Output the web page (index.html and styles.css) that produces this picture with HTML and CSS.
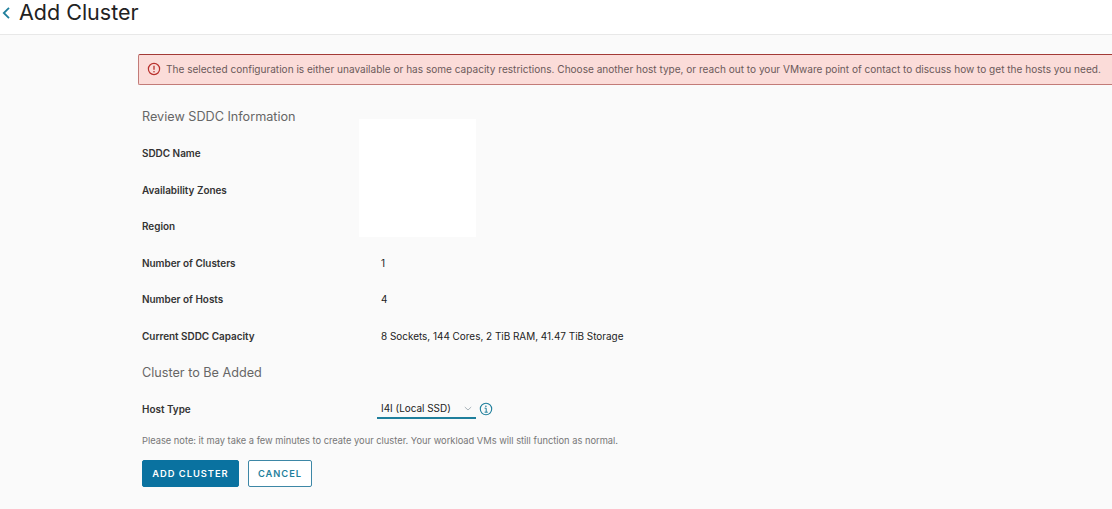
FILE: index.html
```html
<!DOCTYPE html>
<html lang="en">
<head>
<meta charset="utf-8">
<title>Add Cluster</title>
<link rel="stylesheet" href="styles.css">
</head>
<body>
<header class="page-header">
  <svg class="back" width="10" height="14" viewBox="0 0 10 14"><path d="M8 1.8 2.8 7 8 12.2" fill="none" stroke="#1f7f9c" stroke-width="1.8"/></svg>
  <h1>Add Cluster</h1>
</header>
<main class="content">
  <div class="alert">
    <svg class="alert-icon" width="14" height="14" viewBox="0 0 14 14"><circle cx="7" cy="7" r="5.6" fill="none" stroke="#b8302c" stroke-width="1.2"/><path d="M7 3.8v4" stroke="#b8302c" stroke-width="1.3"/><circle cx="7" cy="9.8" r=".8" fill="#b8302c"/></svg>
    <span class="alert-text">The selected configuration is either unavailable or has some capacity restrictions. Choose another host type, or reach out to your VMware point of contact to discuss how to get the hosts you need.</span>
  </div>
  <section class="form">
    <h2 class="row">Review SDDC Information</h2>
    <div class="row"><span class="label">SDDC Name</span></div>
    <div class="row"><span class="label">Availability Zones</span></div>
    <div class="row"><span class="label">Region</span></div>
    <div class="row"><span class="label">Number of Clusters</span><span class="value">1</span></div>
    <div class="row"><span class="label">Number of Hosts</span><span class="value">4</span></div>
    <div class="row"><span class="label">Current SDDC Capacity</span><span class="value">8 Sockets, 144 Cores, 2 TiB RAM, 41.47 TiB Storage</span></div>
    <h2 class="row">Cluster to Be Added</h2>
    <div class="row">
      <span class="label">Host Type</span>
      <span class="select">I4I (Local SSD)
        <svg class="chevron" width="8" height="5" viewBox="0 0 8 5"><path d="M.8 1 4 4l3.2-3" fill="none" stroke="#a9b4ba" stroke-width="1"/></svg>
      </span>
      <svg class="info" width="14" height="14" viewBox="0 0 14 14"><circle cx="7" cy="7" r="5.7" fill="none" stroke="#1f7f9c" stroke-width="1.1"/><path d="M5.6 6.2H7.2V10M5.6 10.2h3.2" fill="none" stroke="#1f7f9c" stroke-width="1"/><circle cx="6.9" cy="4.2" r=".8" fill="#1f7f9c"/></svg>
    </div>
    <p class="note">Please note: it may take a few minutes to create your cluster. Your workload VMs will still function as normal.</p>
    <div class="actions">
      <button class="btn primary" type="button">ADD CLUSTER</button>
      <button class="btn outline" type="button">CANCEL</button>
    </div>
    <div class="redaction"></div>
  </section>
</main>
</body>
</html>
```
FILE: styles.css
```css
* { box-sizing: border-box; }
html, body { margin: 0; height: 100%; }
body {
  background: #fafafa;
  color: #333;
  font-family: Inter, "Liberation Sans", sans-serif;
  overflow: hidden;
}
.page-header {
  height: 35px;
  background: #fff;
  border-bottom: 1px solid #e8e8e8;
  display: flex;
  align-items: center;
  padding: 0 0 11px 1px;
  gap: 8px;
}
.back { flex: none; margin-top: 3px; }
h1 { margin: 0; font-size: 21.5px; font-weight: 400; color: #222; }
.content { padding: 19px 0 0 138px; }
.alert {
  height: 31px;
  width: 1000px;
  display: flex;
  align-items: center;
  gap: 5px;
  padding: 0 0 1px 8px;
  background: #fbdcd9;
  border: 1px solid #c27b78;
  border-top-color: #a33a36;
  border-right: 0;
  border-radius: 2px 0 0 2px;
  font-size: 10.07px;
  color: #6b5a5a;
  white-space: nowrap;
}
.alert-icon { flex: none; }
.form { position: relative; padding: 13.1px 0 0 4px; }
.row {
  height: 36.6px;
  margin: 0;
  display: flex;
  align-items: center;
  font-size: 9.93px;
}
h2.row { font-size: 12.65px; font-weight: 400; color: #666; }
.label { width: 239px; flex: none; font-weight: 600; color: #333; }
.value { color: #222; }
.select {
  width: 99px;
  height: 19px;
  margin-left: -4px;
  padding-left: 4px;
  border-bottom: 2px solid #1f7f9c;
  display: flex;
  align-items: center;
  justify-content: space-between;
  padding-right: 4px;
  color: #222;
  font-size: 9.93px;
}
.info { margin-left: 3px; }
.note { margin: 6.5px 0 0; font-size: 9.3px; line-height: 14px; color: #777; }
.actions { display: flex; gap: 9px; margin-top: 12px; }
.btn {
  height: 27px;
  border-radius: 2px;
  font: 600 9.3px Inter, "Liberation Sans", sans-serif;
  letter-spacing: 1px;
  padding: 0;
}
.primary { width: 97px; background: #0a72a0; border: 1px solid #0a72a0; color: #fff; }
.outline { width: 64px; background: #fff; border: 1px solid #3d87a6; color: #1f7f9c; }
.redaction {
  position: absolute;
  left: 221px;
  top: 34px;
  width: 117px;
  height: 118px;
  background: #fff;
}
```
